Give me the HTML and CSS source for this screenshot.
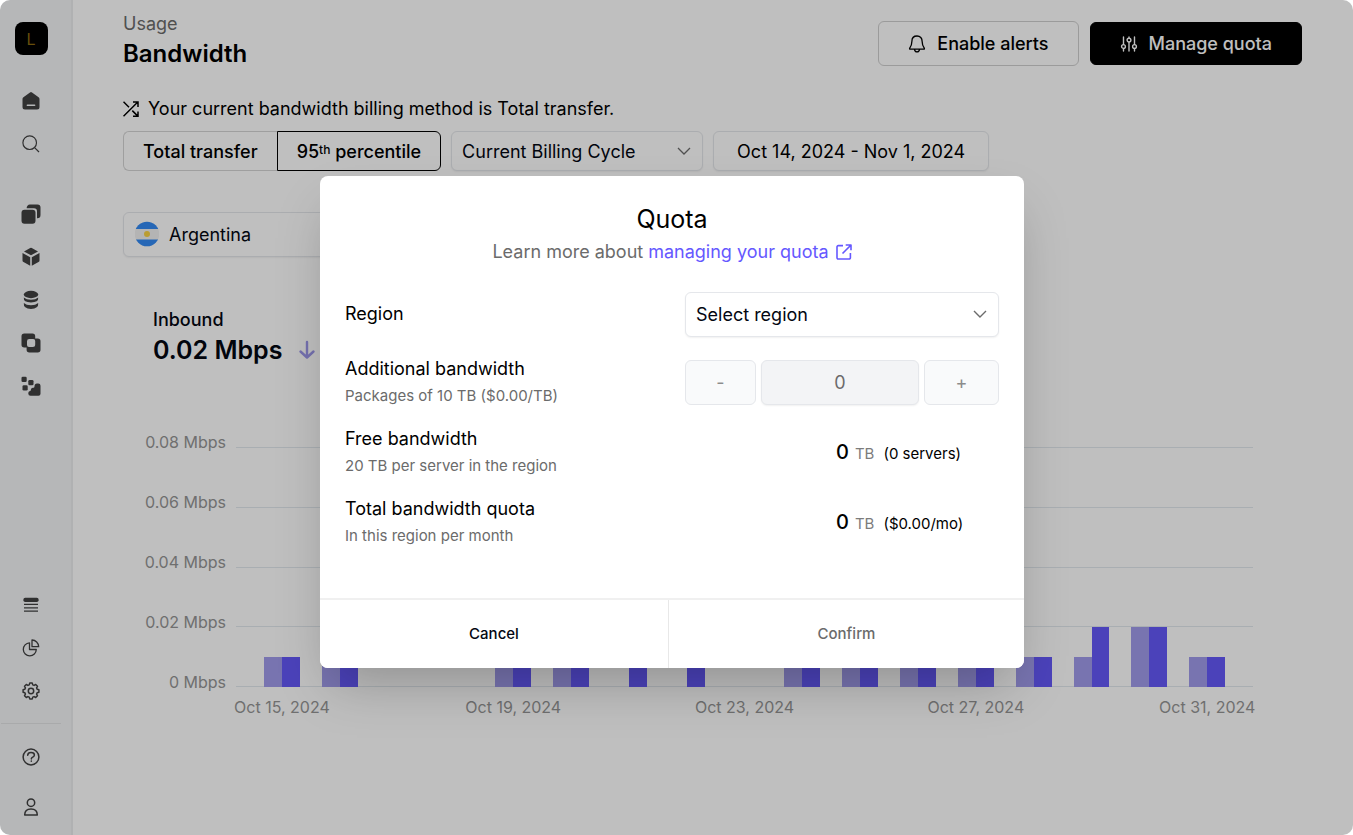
FILE: index.html
```html
<!DOCTYPE html>
<html lang="en">
<head>
<meta charset="utf-8">
<meta name="viewport" content="width=device-width, initial-scale=1">
<title>Bandwidth</title>
<link rel="stylesheet" href="styles.css">
</head>
<body>
<div class="app">
  <nav class="sidebar" aria-label="Main">
    <a class="logo" href="#">L</a>
    <div class="nav-group">
      <a class="nav-item" href="#" aria-label="Home"><svg width="18" height="18" viewBox="0 0 18 18"><path fill="currentColor" fill-rule="evenodd" d="M8 .5a1.6 1.6 0 0 1 2 0l6.600 4.800q.9.700.9 1.800V15a2.500 2.500 0 0 1-2.500 2.500H3A2.500 2.500 0 0 1 .5 15V7.100Q.5 6 1.400 5.300zM5.400 12.500a.8.8 0 0 0 0 1.600h7.200a.8.8 0 0 0 0-1.600z"/></svg></a>
      <a class="nav-item" href="#" aria-label="Search"><svg width="18" height="18" viewBox="0 0 18 18" fill="none" stroke="currentColor" stroke-width="1.200"><circle cx="7.700" cy="7.700" r="6.800"/><path d="M12.600 12.600 17 17"/></svg></a>
    </div>
    <div class="nav-group">
      <a class="nav-item" href="#" aria-label="Servers"><svg width="20" height="20" viewBox="0 0 20 20" fill="currentColor"><rect x=".5" y="5.700" width="14" height="14" rx="3"/><path d="M5.700 4.300A3.300 3.300 0 0 1 9 .5h7.500a3 3 0 0 1 3 3V11a3.300 3.300 0 0 1-3.500 3.300V7.300a3 3 0 0 0-3-3z"/></svg></a>
      <a class="nav-item" href="#" aria-label="Storage"><svg width="18" height="20" viewBox="0 0 18 20" fill="currentColor"><path d="M8.200 1a1.700 1.700 0 0 1 1.600 0l6.200 3.400L9 8.300 2 4.400zM.5 6l7.700 4.200v8.600L1.500 15.100a2 2 0 0 1-1-1.800zM17.500 6 9.800 10.200v8.600l6.700-3.700a2 2 0 0 0 1-1.800z"/></svg></a>
      <a class="nav-item" href="#" aria-label="Databases"><svg width="16" height="20" viewBox="0 0 16 20" fill="currentColor"><ellipse cx="8" cy="4.500" rx="7.200" ry="3.700"/><path d="M.8 7.400q2.500 2.400 7.200 2.400t7.200-2.400q.6 4.800-7.200 5-7.800-.2-7.200-5zM.8 13q2.500 2.200 7.200 2.200t7.200-2.200q.6 5.700-7.200 5.900-7.800-.2-7.200-5.900z"/></svg></a>
      <a class="nav-item" href="#" aria-label="Networks"><svg width="20" height="20" viewBox="0 0 20 20" fill="currentColor"><path fill-rule="evenodd" d="M3.200.5h8.300a2.700 2.700 0 0 1 2.700 2.700v2.300h2.600a2.700 2.700 0 0 1 2.700 2.700v8.600a2.700 2.700 0 0 1-2.700 2.700H8.300a2.700 2.700 0 0 1-2.700-2.700v-2.300H3.200a2.700 2.700 0 0 1-2.700-2.700V3.200A2.700 2.700 0 0 1 3.200.5zM8.300 6a2.300 2.300 0 0 0-2.300 2.300V12a2 2 0 0 0 2 2h3.700a2.500 2.500 0 0 0 2.500-2.500V8a2 2 0 0 0-2-2z"/></svg></a>
      <a class="nav-item" href="#" aria-label="Deployments"><svg width="20" height="20" viewBox="0 0 20 20" fill="currentColor"><rect x=".5" y=".8" width="5.200" height="5.200" rx="1.300"/><rect x="7.300" y="4" width="5.200" height="5.200" rx="1.300"/><rect x="1.500" y="9.300" width="5.200" height="5.200" rx="1.300"/><path d="M17.300 7.500a2.200 2.200 0 0 1 2.200 2.200v8a2 2 0 0 1-2 2h-8a2.200 2.200 0 0 1-2.200-2.200V17a2 2 0 0 1 1.700-2c.9-.2.8-.6.9-1.500a2 2 0 0 1 2-1.700c1.200 0 1.500-.3 1.600-1.500.1-1.800.9-2.800 2.500-2.800z"/></svg></a>
    </div>
    <div class="nav-group nav-bottom">
      <a class="nav-item" href="#" aria-label="Logs"><svg width="16" height="16" viewBox="0 0 16 16" fill="currentColor"><rect x=".4" y=".8" width="15.200" height="4.200" rx="1.800"/><path d="M1 6.700h14v1.200H1zM1 10.200h14v1.200H1zM1 13.500h14v1.200H1z"/></svg></a>
      <a class="nav-item" href="#" aria-label="Usage"><svg width="18" height="18" viewBox="0 0 18 18" fill="none" stroke="currentColor" stroke-width="1.300" stroke-linejoin="round"><path d="M7.500 3.800a6.500 6.500 0 1 0 6.800 6.700H7.500z"/><path d="M10 1a7 7 0 0 1 6.700 6.700H10z"/></svg></a>
      <a class="nav-item" href="#" aria-label="Settings"><svg width="18" height="18" viewBox="0 0 18 18" fill="none" stroke="currentColor" stroke-width="1.500" stroke-linejoin="round"><circle cx="9" cy="9" r="2.700"/><path d="M7.240 2.850 7.750 1.100H10.250L10.760 2.850 12.100 3.410 13.700 2.530 15.470 4.300 14.590 5.900 15.150 7.240 16.900 7.750V10.250L15.150 10.760 14.590 12.100 15.470 13.700 13.700 15.470 12.100 14.590 10.760 15.150 10.250 16.900H7.750L7.240 15.150 5.900 14.590 4.300 15.470 2.530 13.700 3.410 12.100 2.850 10.760 1.100 10.250V7.750L2.850 7.240 3.410 5.900 2.530 4.300 4.300 2.530 5.900 3.410z"/></svg></a>
    </div>
    <hr class="nav-rule">
    <div class="nav-group nav-account">
      <a class="nav-item" href="#" aria-label="Help"><svg width="18" height="18" viewBox="0 0 18 18" fill="none" stroke="currentColor" stroke-width="1.500" stroke-linecap="round"><circle cx="9" cy="9" r="7.900"/><path d="M5.700 7.200C5.800 5.400 7 4.500 9 4.500s3.400.9 3.400 2.500c0 2.300-3 1.900-3.100 3.900"/><path d="M9.300 13.100v.1"/></svg></a>
      <a class="nav-item" href="#" aria-label="Account"><svg width="16" height="18" viewBox="0 0 16 18" fill="none" stroke="currentColor" stroke-width="1.500" stroke-linejoin="round"><circle cx="8" cy="4.700" r="3.700"/><path d="M1.700 17c0-3.600 2.300-6 6.300-6s6.300 2.400 6.300 6z"/></svg></a>
    </div>
  </nav>

  <main class="main">
    <header class="page-head">
      <div>
        <p class="crumb">Usage</p>
        <h1 class="page-title">Bandwidth</h1>
      </div>
      <div class="head-actions">
        <button class="btn btn-outline" type="button"><svg width="18" height="20" viewBox="0 0 18 20" fill="none" stroke="currentColor" stroke-width="1.300" stroke-linejoin="round"><path d="M9 2C5.700 2 3.900 4.300 3.900 7.200c0 3.800-.7 4.800-2.200 7q-.4.900.5 1h13.600q.9-.1.5-1c-1.500-2.200-2.200-3.200-2.200-7C14.100 4.300 12.300 2 9 2zM6.500 15.300c.2 1.700 1 2.500 2.500 2.500s2.300-.8 2.500-2.500"/></svg>Enable alerts</button>
        <button class="btn btn-solid" type="button"><svg width="18" height="18" viewBox="0 0 18 18" fill="none" stroke="currentColor" stroke-width="1.400" stroke-linecap="round"><path d="M3.500 2v7.500M3.500 13.500V16M9 2v1M9 7.200V16M14.500 2v7.500M14.500 13.500V16"/><circle cx="3.500" cy="11.500" r="1.900"/><circle cx="9" cy="5.100" r="1.900"/><circle cx="14.500" cy="11.500" r="1.900"/></svg>Manage quota</button>
      </div>
    </header>

    <p class="billing-note"><svg width="16" height="16" viewBox="0 0 16 16" fill="none" stroke="currentColor" stroke-width="1.500"><path d="M.5.800 6 6.300M.5 15.300 14.800 1M9.300 9.600l5.500 5.500M10 1h5v5M15 10.500v4.700h-5"/></svg>Your current bandwidth billing method is Total transfer.</p>

    <div class="filters">
      <div class="segmented">
        <button class="segment" type="button">Total transfer</button>
        <button class="segment segment-active" type="button" aria-pressed="true"><span>95<sup class="ordinal">th</sup> percentile</span></button>
      </div>
      <div class="select-wrap cycle">
        <select class="select" aria-label="Billing cycle"><option>Current Billing Cycle</option></select>
        <svg class="chevron" width="14" height="8" viewBox="0 0 14 8" fill="none" stroke="currentColor" stroke-width="1.300"><path d="m1 1 6 6 6-6"/></svg>
      </div>
      <button class="date-range" type="button">Oct 14, 2024 - Nov 1, 2024</button>
    </div>

    <div class="select-wrap country">
      <svg class="flag" width="24" height="26" viewBox="0 0 24 26"><defs><clipPath id="flag-clip"><circle cx="12" cy="13" r="12.300"/></clipPath></defs><g clip-path="url(#flag-clip)"><path fill="#f0f0f0" d="M0 0h24v26H0z"/><path fill="#338af3" d="M0 0h24v8H0zM0 18.500h24V26H0z"/></g><circle cx="12" cy="13" r="3" fill="#f9d243"/></svg>
      <select class="select" aria-label="Country"><option>Argentina</option></select>
    </div>

    <section class="inbound">
      <h2 class="stat-label">Inbound</h2>
      <p class="stat-value">0.02 Mbps<svg width="18" height="20" viewBox="0 0 18 20" fill="none" stroke="#9b96e8" stroke-width="2.400" stroke-linecap="round" stroke-linejoin="round"><path d="M9 2v15M2.500 11.500 9 17.500l6.500-6"/></svg></p>
    </section>

    <section class="chart" aria-label="Bandwidth per day">
      <div class="y-axis"><span>0.08 Mbps</span><span>0.06 Mbps</span><span>0.04 Mbps</span><span>0.02 Mbps</span><span>0 Mbps</span></div>
      <div class="plot">
        <div class="grid-lines"><i></i><i></i><i></i><i></i><i></i></div>
        <div class="bars">
          <div class="day"><b class="in low"></b><b class="out low"></b></div>
          <div class="day"><b class="in low"></b><b class="out low"></b></div>
          <div class="day"></div>
          <div class="day"></div>
          <div class="day"><b class="in low"></b><b class="out low"></b></div>
          <div class="day"><b class="in low"></b><b class="out low"></b></div>
          <div class="day"><b class="in"></b><b class="out low"></b></div>
          <div class="day"><b class="in"></b><b class="out low"></b></div>
          <div class="day"></div>
          <div class="day"><b class="in low"></b><b class="out low"></b></div>
          <div class="day"><b class="in low"></b><b class="out low"></b></div>
          <div class="day"><b class="in low"></b><b class="out low"></b></div>
          <div class="day"><b class="in low"></b><b class="out low"></b></div>
          <div class="day"><b class="in low"></b><b class="out low"></b></div>
          <div class="day"><b class="in low"></b><b class="out high"></b></div>
          <div class="day"><b class="in high"></b><b class="out high"></b></div>
          <div class="day"><b class="in low"></b><b class="out low"></b></div>
        </div>
      </div>
      <div class="x-axis"><span>Oct 15, 2024</span><span></span><span></span><span></span><span>Oct 19, 2024</span><span></span><span></span><span></span><span>Oct 23, 2024</span><span></span><span></span><span></span><span>Oct 27, 2024</span><span></span><span></span><span></span><span>Oct 31, 2024</span></div>
    </section>
  </main>

  <div class="backdrop">
    <form class="modal" role="dialog" aria-modal="true" aria-labelledby="quota-title">
      <div class="modal-body">
        <h2 class="modal-title" id="quota-title">Quota</h2>
        <p class="modal-lead">Learn more about <a class="link" href="#">managing your quota<svg width="16" height="16" viewBox="0 0 16 16" fill="none" stroke="currentColor" stroke-width="1.600" stroke-linejoin="round"><path d="M7 1.600H2.200A1.200 1.200 0 0 0 1 2.800v11A1.200 1.200 0 0 0 2.200 15h11a1.200 1.200 0 0 0 1.200-1.200V9M9.700 1H15v5.300M15 1 6.500 9.500"/></svg></a></p>
        <div class="fields">
          <div class="field">
            <label class="field-name" for="region">Region</label>
            <div class="select-wrap field-control">
              <select class="select" id="region"><option>Select region</option></select>
              <svg class="chevron" width="14" height="8" viewBox="0 0 14 8" fill="none" stroke="currentColor" stroke-width="1.400"><path d="m1 1 6 6 6-6"/></svg>
            </div>
          </div>
          <div class="field">
            <div>
              <label class="field-name" for="packages">Additional bandwidth</label>
              <p class="field-help">Packages of 10 TB ($0.00/TB)</p>
            </div>
            <div class="stepper field-control">
              <button class="step" type="button" disabled>-</button>
              <input class="step-value" id="packages" type="text" value="0" disabled>
              <button class="step" type="button" disabled>+</button>
            </div>
          </div>
          <div class="field">
            <div>
              <h3 class="field-name">Free bandwidth</h3>
              <p class="field-help">20 TB per server in the region</p>
            </div>
            <p class="total field-control"><span class="amount">0</span><span class="unit">TB</span><span class="detail">(0 servers)</span></p>
          </div>
          <div class="field">
            <div>
              <h3 class="field-name">Total bandwidth quota</h3>
              <p class="field-help">In this region per month</p>
            </div>
            <p class="total field-control"><span class="amount">0</span><span class="unit">TB</span><span class="detail">($0.00/mo)</span></p>
          </div>
        </div>
      </div>
      <div class="modal-foot">
        <button class="foot-btn" type="button">Cancel</button>
        <button class="foot-btn" type="submit" disabled>Confirm</button>
      </div>
    </form>
  </div>
</div>
</body>
</html>
```
FILE: styles.css
```css
* {
  box-sizing: border-box;
}

body {
  margin: 0;
  background: #fff;
  color: #000;
  font: 400 18px/24px Inter, "Liberation Sans", sans-serif;
}

h1, h2, h3, p {
  margin: 0;
  font-size: inherit;
  font-weight: inherit;
}

button, select, input {
  font: inherit;
  color: inherit;
}

svg {
  flex: none;
}

.app {
  position: relative;
  display: flex;
  min-height: 100vh;
  overflow: hidden;
  border-radius: 10px;
}

/* Sidebar */
.sidebar {
  display: flex;
  flex: none;
  flex-direction: column;
  width: 73px;
  padding: 22px 9px 7px 0;
  border-right: 2px solid #ebecee;
  background: #f3f4f6;
}

.logo {
  display: grid;
  place-items: center;
  align-self: center;
  width: 33px;
  height: 33px;
  margin-bottom: 24px;
  border-radius: 8px;
  background: #000;
  color: #8a6a10;
  font-size: 16px;
  text-decoration: none;
}

.nav-group {
  display: flex;
  flex-direction: column;
  margin-bottom: 27px;
}

.nav-item {
  display: grid;
  place-items: center;
  height: 43px;
  color: #414141;
}

.nav-bottom {
  margin: auto 0 11px;
}

.nav-rule {
  width: 60px;
  margin: 0 1px 11px;
  border: 0;
  border-top: 1px solid #e2e3e5;
}

.nav-account {
  gap: 7px;
  margin: 0;
}

/* Page */
.main {
  flex: 1;
  min-width: 0;
  padding: 12px 51px 24px 50px;
}

.page-head {
  display: flex;
  justify-content: space-between;
}

.crumb {
  color: #6b6b6b;
}

.page-title {
  font-size: 24px;
  font-weight: 600;
  line-height: 36px;
}

.head-actions {
  display: flex;
  align-items: center;
  gap: 11px;
  padding-top: 2px;
}

.btn {
  display: flex;
  align-items: center;
  gap: 11px;
  height: 45px;
  padding: 1px 29px 0;
  border: 1px solid #cfcfcf;
  border-radius: 6px;
  background: #fff;
  font-weight: 500;
}

.btn-solid {
  height: 43px;
  border-color: #000;
  background: #000;
  color: #fff;
}

.billing-note {
  display: flex;
  align-items: center;
  gap: 9px;
  margin: 25px 0 10px;
}

.filters {
  display: flex;
  gap: 10px;
  height: 40px;
}

.segmented {
  display: flex;
}

.segment {
  padding: 1px 19px 0;
  border: 1px solid #d4d4d4;
  border-right: 0;
  border-radius: 6px 0 0 6px;
  background: transparent;
  font-weight: 500;
}

.segment-active {
  border: 1px solid #000;
  border-radius: 0 6px 6px 0;
}

.ordinal {
  font-size: 12px;
  line-height: 0;
  vertical-align: 4px;
}

.select-wrap {
  position: relative;
}

.select {
  width: 100%;
  height: 100%;
  padding: 1px 36px 0 10px;
  appearance: none;
  border: 1px solid #e5e7eb;
  border-radius: 6px;
  background: #fff;
  box-shadow: 0 1px 2px rgba(0, 0, 0, 0.06);
  color: #030712;
}

.chevron {
  position: absolute;
  top: 50%;
  right: 12px;
  margin-top: -4px;
  color: #6b6b6b;
  pointer-events: none;
}

.cycle {
  width: 252px;
}

.date-range {
  width: 276px;
  padding: 1px 0 0;
  border: 1px solid #e5e7eb;
  border-radius: 6px;
  background: #fff;
  box-shadow: 0 1px 2px rgba(0, 0, 0, 0.06);
}

.country {
  width: 320px;
  height: 45px;
  margin-top: 41px;
}

.country .select {
  padding-left: 45px;
}

.flag {
  position: absolute;
  top: 9px;
  left: 12px;
}

.inbound {
  margin: 51px 0 0 30px;
  color: #030712;
}

.stat-label {
  font-weight: 500;
}

.stat-value {
  display: flex;
  align-items: center;
  gap: 16px;
  font-size: 25px;
  font-weight: 600;
  line-height: 36px;
}

/* Chart */
.chart {
  display: grid;
  grid-template-columns: 103px 1fr;
  margin: 79px 49px 0 0;
  padding-left: 10px;
  color: #959595;
  font-size: 16px;
}

.y-axis {
  display: flex;
  flex-direction: column;
  justify-content: space-between;
  height: 264px;
  margin-top: -17px;
  padding-right: 10px;
  text-align: right;
}

.plot {
  position: relative;
  height: 240px;
}

.grid-lines {
  display: flex;
  flex-direction: column;
  justify-content: space-between;
  height: 100%;
}

.grid-lines i {
  height: 1px;
  background: #e2e8ee;
}

.bars {
  position: absolute;
  inset: 0;
  display: flex;
  padding: 0 17px;
}

.day {
  display: flex;
  flex: 1;
  align-items: flex-end;
  justify-content: center;
}

.in, .out {
  width: 31%;
}

.in {
  background: #a09beb;
}

.out {
  background: #6459f8;
}

.low {
  height: 12.5%;
}

.high {
  height: 25%;
}

.x-axis {
  display: flex;
  grid-column: 2;
  padding: 1px 17px 0;
}

.x-axis span {
  display: flex;
  flex: 1 1 0;
  justify-content: center;
  width: 0;
  white-space: nowrap;
}

/* Quota dialog */
.backdrop {
  position: absolute;
  inset: 0;
  display: grid;
  place-items: center;
  padding: 8px 9px 0 0;
  background: rgba(0, 0, 0, 0.25);
}

.modal {
  width: 704px;
  max-width: 100%;
  overflow: hidden;
  border-radius: 8px;
  background: #fff;
  box-shadow: 0 25px 50px -12px rgba(0, 0, 0, 0.25);
}

.modal-body {
  padding: 26px 25px 49px;
}

.modal-title {
  font-size: 25px;
  font-weight: 400;
  line-height: 34px;
  text-align: center;
}

.modal-lead {
  display: flex;
  align-items: center;
  justify-content: center;
  gap: 5px;
  margin: 4px 0 28px;
  color: #6b6b6b;
}

.link {
  display: flex;
  align-items: center;
  gap: 7px;
  color: #6558ff;
  text-decoration: none;
}

.fields {
  display: grid;
  gap: 18px;
}

.field {
  display: flex;
  align-items: center;
  justify-content: space-between;
  min-height: 52px;
}

.field:first-child {
  min-height: 45px;
  margin-bottom: 2px;
}

.field-name {
  display: block;
}

.field-help {
  padding-top: 3px;
  color: #6b6b6b;
  font-size: 15px;
}

.field-control {
  width: 314px;
  min-height: 45px;
}

.field-control .select {
  height: 45px;
}

.stepper {
  display: grid;
  grid-template-columns: 71px 1fr 75px;
  gap: 5px;
}

.step, .step-value {
  min-width: 0;
  padding: 0;
  border: 1px solid #e5e7eb;
  border-radius: 6px;
  background: #f9fafb;
  color: #8c8c8c;
  text-align: center;
}

.step-value {
  background: #f3f4f6;
  box-shadow: 0 1px 2px rgba(0, 0, 0, 0.06);
  color: #6b6b6b;
}

.total {
  display: flex;
  align-items: baseline;
  padding: 10px 0 0 151px;
  font-size: 15px;
}

.amount {
  font-size: 20px;
  font-weight: 500;
}

.unit {
  margin: 0 9px 0 6px;
  color: #7c7c7c;
}

.modal-foot {
  display: grid;
  grid-template-columns: 349px 1fr;
  border-top: 2px solid #f0f0f0;
}

.foot-btn {
  height: 68px;
  border: 0;
  background: #fff;
  color: #030712;
  font-size: 15px;
  font-weight: 500;
}

.foot-btn:first-child {
  border-right: 1px solid #e8e8e8;
}

.foot-btn:disabled {
  color: #6b6b6b;
}
```
